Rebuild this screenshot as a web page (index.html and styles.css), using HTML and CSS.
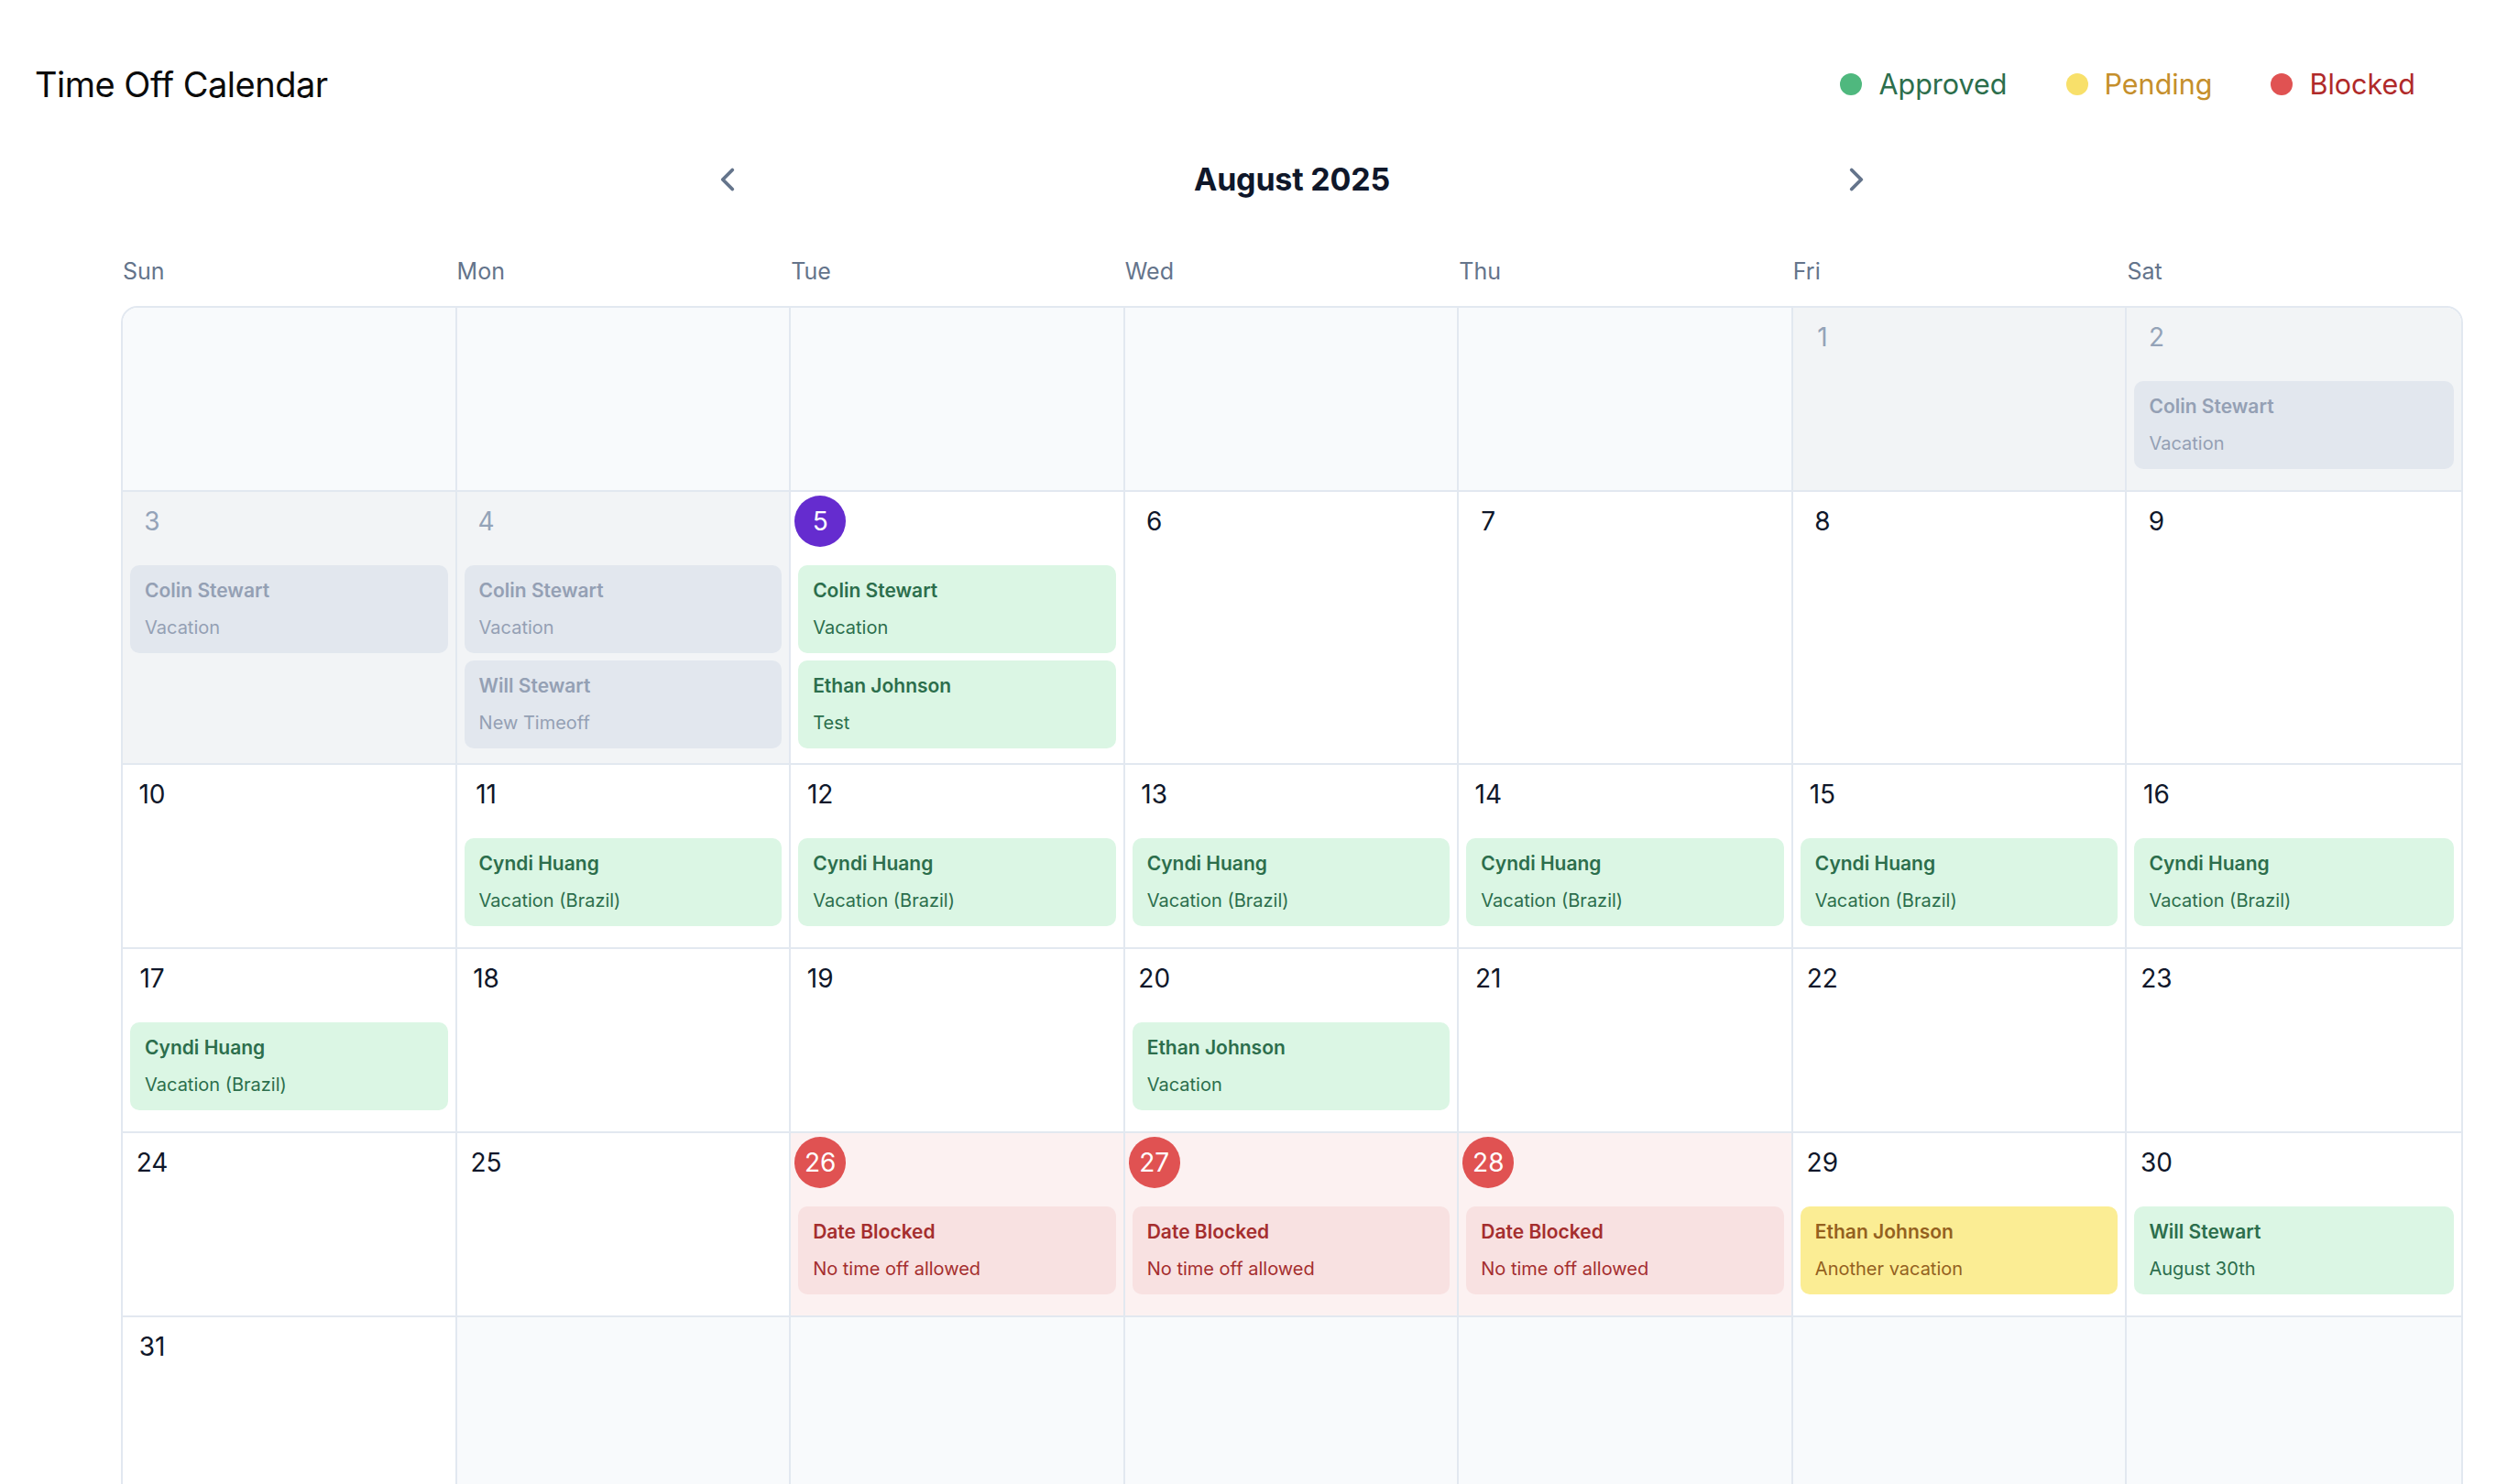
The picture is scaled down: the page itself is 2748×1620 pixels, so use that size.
FILE: index.html
```html
<!DOCTYPE html>
<html lang="en">
<head>
<meta charset="utf-8">
<title>Time Off Calendar</title>
<link rel="stylesheet" href="styles.css">
</head>
<body>
<div class="page">
  <header class="topbar">
    <h1 class="title">Time Off Calendar</h1>
    <ul class="legend">
      <li class="legend-item approved"><span class="dot"></span>Approved</li>
      <li class="legend-item pending"><span class="dot"></span>Pending</li>
      <li class="legend-item blocked"><span class="dot"></span>Blocked</li>
    </ul>
  </header>

  <section class="cal">
    <div class="nav">
      <button class="nav-btn" aria-label="Previous month">
        <svg width="42" height="42" viewBox="0 0 24 24" fill="none" stroke="#64748b" stroke-width="2.2" stroke-linecap="round" stroke-linejoin="round"><path d="M15 18l-6-6 6-6"/></svg>
      </button>
      <h2 class="month">August 2025</h2>
      <button class="nav-btn" aria-label="Next month">
        <svg width="42" height="42" viewBox="0 0 24 24" fill="none" stroke="#64748b" stroke-width="2.2" stroke-linecap="round" stroke-linejoin="round"><path d="M9 18l6-6-6-6"/></svg>
      </button>
    </div>

    <div class="weekdays">
      <div class="weekday">Sun</div>
      <div class="weekday">Mon</div>
      <div class="weekday">Tue</div>
      <div class="weekday">Wed</div>
      <div class="weekday">Thu</div>
      <div class="weekday">Fri</div>
      <div class="weekday">Sat</div>
    </div>

    <div class="grid">
      <!-- week 1 -->
      <div class="cell outside"></div>
      <div class="cell outside"></div>
      <div class="cell outside"></div>
      <div class="cell outside"></div>
      <div class="cell outside"></div>
      <div class="cell past"><div class="num">1</div></div>
      <div class="cell past">
        <div class="num">2</div>
        <div class="events">
          <div class="event ev-past"><div class="ev-name">Colin Stewart</div><div class="ev-sub">Vacation</div></div>
        </div>
      </div>

      <!-- week 2 -->
      <div class="cell past">
        <div class="num">3</div>
        <div class="events">
          <div class="event ev-past"><div class="ev-name">Colin Stewart</div><div class="ev-sub">Vacation</div></div>
        </div>
      </div>
      <div class="cell past">
        <div class="num">4</div>
        <div class="events">
          <div class="event ev-past"><div class="ev-name">Colin Stewart</div><div class="ev-sub">Vacation</div></div>
          <div class="event ev-past"><div class="ev-name">Will Stewart</div><div class="ev-sub">New Timeoff</div></div>
        </div>
      </div>
      <div class="cell">
        <div class="num today">5</div>
        <div class="events">
          <div class="event ev-approved"><div class="ev-name">Colin Stewart</div><div class="ev-sub">Vacation</div></div>
          <div class="event ev-approved"><div class="ev-name">Ethan Johnson</div><div class="ev-sub">Test</div></div>
        </div>
      </div>
      <div class="cell"><div class="num">6</div></div>
      <div class="cell"><div class="num">7</div></div>
      <div class="cell"><div class="num">8</div></div>
      <div class="cell"><div class="num">9</div></div>

      <!-- week 3 -->
      <div class="cell"><div class="num">10</div></div>
      <div class="cell">
        <div class="num">11</div>
        <div class="events"><div class="event ev-approved"><div class="ev-name">Cyndi Huang</div><div class="ev-sub">Vacation (Brazil)</div></div></div>
      </div>
      <div class="cell">
        <div class="num">12</div>
        <div class="events"><div class="event ev-approved"><div class="ev-name">Cyndi Huang</div><div class="ev-sub">Vacation (Brazil)</div></div></div>
      </div>
      <div class="cell">
        <div class="num">13</div>
        <div class="events"><div class="event ev-approved"><div class="ev-name">Cyndi Huang</div><div class="ev-sub">Vacation (Brazil)</div></div></div>
      </div>
      <div class="cell">
        <div class="num">14</div>
        <div class="events"><div class="event ev-approved"><div class="ev-name">Cyndi Huang</div><div class="ev-sub">Vacation (Brazil)</div></div></div>
      </div>
      <div class="cell">
        <div class="num">15</div>
        <div class="events"><div class="event ev-approved"><div class="ev-name">Cyndi Huang</div><div class="ev-sub">Vacation (Brazil)</div></div></div>
      </div>
      <div class="cell">
        <div class="num">16</div>
        <div class="events"><div class="event ev-approved"><div class="ev-name">Cyndi Huang</div><div class="ev-sub">Vacation (Brazil)</div></div></div>
      </div>

      <!-- week 4 -->
      <div class="cell">
        <div class="num">17</div>
        <div class="events"><div class="event ev-approved"><div class="ev-name">Cyndi Huang</div><div class="ev-sub">Vacation (Brazil)</div></div></div>
      </div>
      <div class="cell"><div class="num">18</div></div>
      <div class="cell"><div class="num">19</div></div>
      <div class="cell">
        <div class="num">20</div>
        <div class="events"><div class="event ev-approved"><div class="ev-name">Ethan Johnson</div><div class="ev-sub">Vacation</div></div></div>
      </div>
      <div class="cell"><div class="num">21</div></div>
      <div class="cell"><div class="num">22</div></div>
      <div class="cell"><div class="num">23</div></div>

      <!-- week 5 -->
      <div class="cell"><div class="num">24</div></div>
      <div class="cell"><div class="num">25</div></div>
      <div class="cell blocked-day">
        <div class="num blocked-num">26</div>
        <div class="events"><div class="event ev-blocked"><div class="ev-name">Date Blocked</div><div class="ev-sub">No time off allowed</div></div></div>
      </div>
      <div class="cell blocked-day">
        <div class="num blocked-num">27</div>
        <div class="events"><div class="event ev-blocked"><div class="ev-name">Date Blocked</div><div class="ev-sub">No time off allowed</div></div></div>
      </div>
      <div class="cell blocked-day">
        <div class="num blocked-num">28</div>
        <div class="events"><div class="event ev-blocked"><div class="ev-name">Date Blocked</div><div class="ev-sub">No time off allowed</div></div></div>
      </div>
      <div class="cell">
        <div class="num">29</div>
        <div class="events"><div class="event ev-pending"><div class="ev-name">Ethan Johnson</div><div class="ev-sub">Another vacation</div></div></div>
      </div>
      <div class="cell">
        <div class="num">30</div>
        <div class="events"><div class="event ev-approved"><div class="ev-name">Will Stewart</div><div class="ev-sub">August 30th</div></div></div>
      </div>

      <!-- week 6 -->
      <div class="cell"><div class="num">31</div></div>
      <div class="cell outside"></div>
      <div class="cell outside"></div>
      <div class="cell outside"></div>
      <div class="cell outside"></div>
      <div class="cell outside"></div>
      <div class="cell outside"></div>
    </div>
  </section>
</div>
</body>
</html>
```

FILE: styles.css
```css
* { box-sizing: border-box; }

html, body {
  margin: 0;
  background: #ffffff;
}

body {
  font-family: Inter, "Noto Sans", "Liberation Sans", sans-serif;
  color: #0f172a;
}

.page {
  padding: 68px 40px 40px 38px;
}

/* ---------- top bar ---------- */
.topbar {
  display: flex;
  justify-content: space-between;
  align-items: center;
  height: 48px;
}

.title {
  margin: 0;
  font-size: 38px;
  line-height: 48px;
  font-weight: 400;
  letter-spacing: -0.5px;
  color: #0b0b0b;
}

.legend {
  display: flex;
  gap: 64px;
  margin: 0 72px 0 0;
  padding: 0;
  list-style: none;
}

.legend-item {
  display: flex;
  align-items: center;
  gap: 18px;
  font-size: 30.5px;
  line-height: 40px;
}

.dot {
  width: 24px;
  height: 24px;
  border-radius: 50%;
}

.legend-item.approved { color: #2c6e4c; }
.legend-item.approved .dot { background: #4fb87e; }
.legend-item.pending { color: #c58f2c; }
.legend-item.pending .dot { background: #f8e06a; }
.legend-item.blocked { color: #b02a2a; }
.legend-item.blocked .dot { background: #e05252; }

/* ---------- calendar ---------- */
.cal {
  margin: 56px 20px 0 94px;
}

.nav {
  width: 1280px;
  height: 48px;
  margin: 0 auto;
  display: flex;
  justify-content: space-between;
  align-items: center;
}

.nav-btn {
  width: 48px;
  height: 48px;
  padding: 0;
  border: 0;
  background: none;
  display: flex;
  align-items: center;
  justify-content: center;
}

.month {
  margin: 0;
  font-size: 34px;
  line-height: 48px;
  font-weight: 700;
  letter-spacing: -0.2px;
  color: #0f172a;
}

.weekdays {
  display: grid;
  grid-template-columns: repeat(7, 1fr);
  padding: 0 2px;
  margin: 60px 0 22px;
}

.weekday {
  font-size: 25px;
  line-height: 32px;
  color: #64748b;
}

.grid {
  display: grid;
  grid-template-columns: repeat(7, 1fr);
  border: 2px solid #e2e8f0;
  border-radius: 18px;
  overflow: hidden;
}

.cell {
  min-height: 201px;
  padding: 4px 4px 16px;
  border-right: 2px solid #e2e8f0;
  border-bottom: 2px solid #e2e8f0;
  background: #ffffff;
  min-width: 0;
}

.cell:nth-child(7n) { border-right: 0; }

.cell.outside { background: #f8fafc; }
.cell.past { background: #f2f4f6; }
.cell.blocked-day { background: #fcf1f1; }

.num {
  width: 56px;
  height: 56px;
  border-radius: 50%;
  display: flex;
  align-items: center;
  justify-content: center;
  font-size: 28px;
  color: #0f172a;
}

.past .num { color: #94a3b8; }

.num.today {
  background: #652ccf;
  color: #ffffff;
}

.num.blocked-num {
  background: #e05252;
  color: #ffffff;
}

.events {
  margin: 20px 4px 0;
  display: flex;
  flex-direction: column;
  gap: 8px;
}

.event {
  border-radius: 10px;
  padding: 12px 16px;
}

.ev-name {
  font-size: 21px;
  line-height: 32px;
  font-weight: 600;
  white-space: nowrap;
}

.ev-sub {
  font-size: 20px;
  line-height: 32px;
  margin-top: 8px;
  white-space: nowrap;
}

.ev-past { background: #e2e7ee; color: #94a0b4; }
.ev-approved { background: #dbf6e4; color: #2c6e4c; }
.ev-pending { background: #fbed94; color: #94611f; }
.ev-blocked { background: #f8e1e1; color: #a52e2e; }
```
